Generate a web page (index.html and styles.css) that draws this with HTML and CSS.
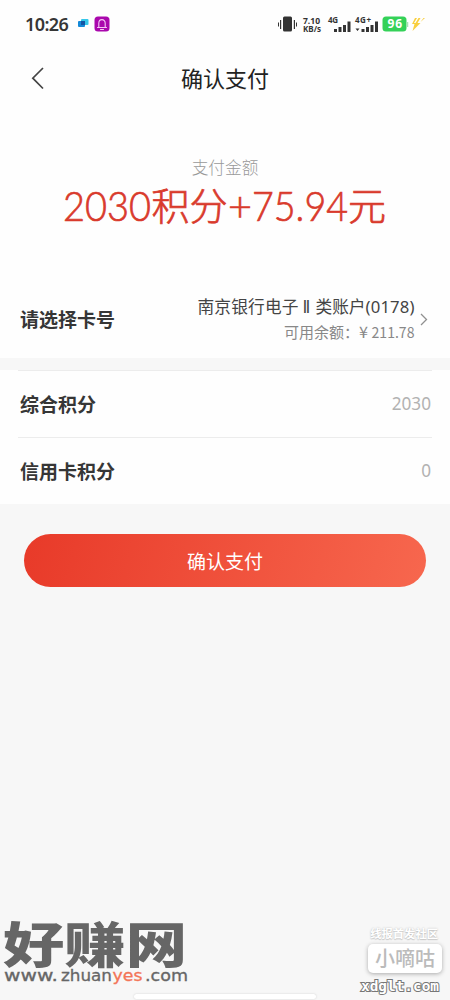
FILE: index.html
```html
<!DOCTYPE html>
<html lang="zh-CN">
<head>
<meta charset="utf-8">
<title>确认支付</title>
<link rel="stylesheet" href="styles.css">
</head>
<body>
<div class="screen">
  <header class="status">
    <span class="clock">10:26</span>
    <svg class="app-icons" width="34" height="16" viewBox="0 0 34 16">
      <rect x="4" y="3" width="7.500" height="6" rx="1" fill="#35c7ea"/>
      <rect x="1" y="5" width="7" height="6" rx="1" fill="#1489d8"/>
      <rect x="4" y="5" width="4" height="4" fill="#1454a4"/>
      <rect x="17.500" y=".5" width="15" height="15" rx="3.500" fill="#aa08ad"/>
      <path d="M20.500 11.500h9M21.800 11V7.300a3.200 3.700 0 0 1 6.400 0V11M23.500 13.500h3" fill="none" stroke="#f4c8f5" stroke-width="1.100" stroke-linecap="round"/>
    </svg>
    <svg class="system" width="150" height="22" viewBox="0 0 150 22">
      <g fill="#333">
        <rect x="5" y="3.500" width="9" height="15" rx="1.500"/>
        <path d="M2 7h1.200v9H2zM0 9.500h1v4H0zM15.800 7H17v9h-1.200zM18 9.500h1v4h-1z"/>
        <text class="tiny" x="25" y="10.500" textLength="17">7.10</text>
        <text class="tiny" x="25" y="18.500" textLength="18" lengthAdjust="spacingAndGlyphs">KB/s</text>
        <text class="net" x="50" y="9.500" textLength="10">4G</text>
        <path d="M56 16h3v3h-3zM60.500 14h3v5h-3zM65 12h3v7h-3zM69.500 8.500h3V19h-3z"/>
        <text class="net" x="77" y="9.500" textLength="16">4G+</text>
        <path d="M77.500 15.500h4l-2 2.500zM83.500 16h3v3h-3zM88 14h3v5h-3zM92.500 12h3v7h-3zM97 8.500h3V19h-3z"/>
      </g>
      <rect x="104.500" y="3.500" width="24" height="15" rx="3.500" fill="#34d158"/>
      <path d="M129.500 9v5" stroke="#a9dfb5" stroke-width="1.500"/>
      <text class="battery" x="109.500" y="15.200" textLength="14.500">96</text>
      <path d="M137 5l-3 6h2.500l-2 7 8-8h-3l3-5h-2l-3 5h-1.500l3-5zM147 5l-4.500 4 3-4z" fill="#f9cf3f"/>
    </svg>
  </header>

  <nav class="nav">
    <svg class="back" width="13" height="23" viewBox="0 0 13 23"><path d="M12 1L1.800 11.200 12 21.500" fill="none" stroke="#444" stroke-width="1.700"/></svg>
    <h1 class="title">确认支付</h1>
  </nav>

  <section class="amount">
    <div class="caption">支付金额</div>
    <svg class="total" width="330" height="50" viewBox="0 0 330 50">
      <text class="digits" x="3" y="36" textLength="88" lengthAdjust="spacingAndGlyphs">2030</text>
      <text class="hanzi" x="91.500" y="35" textLength="76">积分</text>
      <text class="digits" x="168" y="36" textLength="24">+</text>
      <text class="digits" x="192" y="36" textLength="96" lengthAdjust="spacingAndGlyphs">75.94</text>
      <text class="hanzi" x="288" y="35">元</text>
    </svg>
  </section>

  <section class="row card">
    <span class="label">请选择卡号</span>
    <div class="account">
      <svg width="222" height="60" viewBox="0 -6 222 60">
        <g class="bank">
          <text x="2.500" y="17.500" textLength="101">南京银行电子</text>
          <text x="107.500" y="17.500" textLength="8">II</text>
          <text x="120.500" y="17.500" textLength="50">类账户</text>
          <text class="bank-number" x="170.500" y="17.500" textLength="49">(0178)</text>
        </g>
        <text class="balance" x="89" y="43" textLength="75">可用余额：</text>
        <text class="balance" x="164" y="43" textLength="9" lengthAdjust="spacingAndGlyphs">¥</text>
        <text class="balance" x="176.500" y="43" textLength="43" lengthAdjust="spacingAndGlyphs">211.78</text>
      </svg>
      <svg width="8" height="13" viewBox="0 0 8 13"><path d="M1 1l5.500 5.500L1 12" fill="none" stroke="#909090" stroke-width="1.300"/></svg>
    </div>
  </section>

  <section class="points">
    <div class="row point"><span class="label">综合积分</span><span class="value">2030</span></div>
    <div class="row point"><span class="label">信用卡积分</span><span class="value">0</span></div>
  </section>

  <button class="pay">确认支付</button>

  <svg class="mark-left" width="190" height="70" viewBox="0 0 190 70">
    <text class="brand" x="3" y="43.500" textLength="184" lengthAdjust="spacingAndGlyphs">好赚网</text>
    <text class="site" x="4" y="61.500" textLength="54" lengthAdjust="spacingAndGlyphs">www.</text>
    <text class="site" x="61" y="61.500" textLength="51" lengthAdjust="spacingAndGlyphs">zhuan</text>
    <text class="site yes" x="112.500" y="61.500" textLength="30" lengthAdjust="spacingAndGlyphs">yes</text>
    <text class="site" x="145" y="61.500" textLength="43" lengthAdjust="spacingAndGlyphs">.com</text>
  </svg>

  <div class="mark-right">
    <div class="slogan">线报首发社区</div>
    <div class="badge">小嘀咕</div>
    <svg width="82" height="20" viewBox="0 0 82 20"><text class="domain" x="1" y="12.500" textLength="78" lengthAdjust="spacingAndGlyphs">xdglt.com</text></svg>
  </div>
  <div class="home"></div>
</div>
</body>
</html>
```
FILE: styles.css
```css
* { box-sizing: border-box; }
body { margin: 0; background: #f7f7f7; font-family: "Noto Sans CJK SC", sans-serif; color: #363636; }
.screen { position: relative; width: 450px; height: 1000px; overflow: hidden; background: #f7f7f7; }
svg { display: block; }

.status { display: flex; align-items: center; height: 48px; padding: 0 23px 0 25px; background: #fefefe; }
.clock { font: 600 18px/24px "Noto Sans", sans-serif; letter-spacing: -.6px; width: 52px; white-space: nowrap; }
.system { margin-left: auto; margin-right: -1px; overflow: visible; }
.tiny { font: 700 8.500px "Noto Sans", sans-serif; }
.net { font: 700 8px "Noto Sans", sans-serif; }
.battery { font: 700 12px "Noto Sans", sans-serif; fill: #fff; }

.nav { display: grid; grid-template-columns: 60px 1fr 60px; align-items: center; height: 60px; background: #fefefe; }
.back { margin-left: 31px; }
.title { margin: -2px 0 0; text-align: center; font-size: 22px; line-height: 30px; font-weight: 400; color: #222; }

.amount { display: flex; flex-direction: column; align-items: center; height: 172px; padding-top: 47px; background: #fefefe; }
.caption { font-size: 16.700px; line-height: 24px; font-weight: 300; color: #999; }
.total { margin-top: 6px; overflow: visible; }
.digits { font: 300 41.500px Lato, sans-serif; fill: #d93a2c; stroke: #d93a2c; stroke-width: .7px; }
.hanzi { font: 300 38px "Noto Sans CJK SC", sans-serif; fill: #d93a2c; stroke: #d93a2c; stroke-width: .7px; }

.row { display: flex; align-items: center; justify-content: space-between; background: #fefefe; }
.card { height: 78px; padding: 0 22px 0 20px; }
.label { font-size: 19px; line-height: 28px; font-weight: 700; margin-top: -1px; }
.account { display: flex; align-items: center; gap: 3px; }
.bank { font-size: 16.700px; fill: #444; }
.bank-number { font-family: "Noto Sans", sans-serif; }
.balance { font-size: 15px; font-weight: 400; fill: #888; }

.points { margin-top: 12px; padding: 0 18px; background: #fefefe; }
.point { height: 67px; padding: 0 1px 0 2px; border-top: 1px solid #ececec; }
.value { font: 400 17.200px/26px "Noto Sans", sans-serif; color: #b2b2b2; }

.pay { display: block; width: 402px; height: 53px; margin: 30px 24px 0; padding: 0; border: 0; border-radius: 27px; background: linear-gradient(105deg, #e83a29, #f7674e); color: #fff; font: 400 19px/53px "Noto Sans CJK SC", sans-serif; }

.mark-left { position: absolute; left: 0; bottom: 11px; }
.brand { font: 900 49px "Noto Sans CJK SC", sans-serif; fill: #666; }
.site { font: 400 15px "DejaVu Sans", sans-serif; fill: #666; stroke: #666; stroke-width: .3px; }
.yes { fill: #f37558; stroke: #f37558; }

.mark-right { position: absolute; right: 8px; top: 925px; width: 82px; display: flex; flex-direction: column; align-items: flex-end; }
.slogan { font-size: 11.300px; line-height: 16px; font-weight: 700; color: #fff; text-shadow: 0 0 2px #bbb, 0 1px 1px #ccc; margin-right: 4px; white-space: nowrap; }
.badge { width: 74px; height: 29px; margin-top: 3px; border-radius: 5px; background: #fff; box-shadow: 0 1px 4px #aaa; color: #bbb; font-size: 20px; line-height: 28px; font-weight: 500; text-align: center; white-space: nowrap; }
.badge + svg { margin-top: 5px; overflow: visible; }
.domain { font: 700 14px "DejaVu Sans Mono", monospace; fill: #fff; stroke: #777; stroke-width: 2px; paint-order: stroke; }
.home { position: absolute; left: 134px; top: 994px; width: 182px; height: 5px; border-radius: 3px; background: #fff; box-shadow: 0 0 2px #ccc; }
```
